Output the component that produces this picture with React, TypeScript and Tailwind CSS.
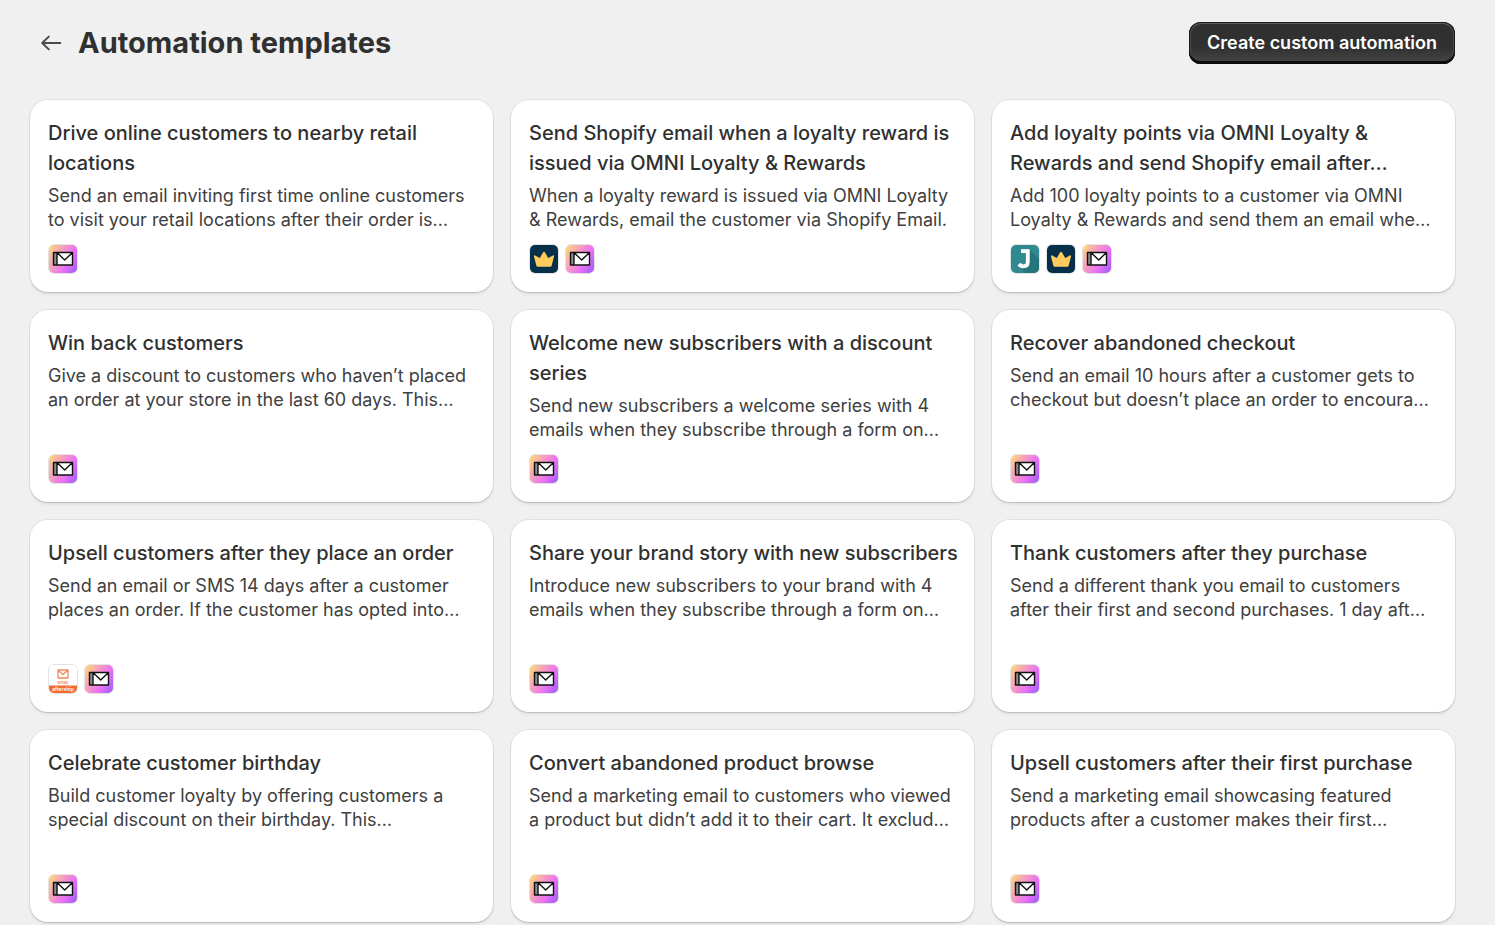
import type { ReactElement } from "react";

type AppName = "email" | "loyalty" | "joy" | "aftership";

type Template = {
  title: string;
  description: string;
  apps: AppName[];
};

const templates: Template[] = [
  {
    title: "Drive online customers to nearby retail locations",
    description:
      "Send an email inviting first time online customers to visit your retail locations after their order is…",
    apps: ["email"],
  },
  {
    title: "Send Shopify email when a loyalty reward is issued via OMNI Loyalty & Rewards",
    description:
      "When a loyalty reward is issued via OMNI Loyalty & Rewards, email the customer via Shopify Email.",
    apps: ["loyalty", "email"],
  },
  {
    title: "Add loyalty points via OMNI Loyalty & Rewards and send Shopify email after…",
    description:
      "Add 100 loyalty points to a customer via OMNI Loyalty & Rewards and send them an email whe…",
    apps: ["joy", "loyalty", "email"],
  },
  {
    title: "Win back customers",
    description:
      "Give a discount to customers who haven’t placed an order at your store in the last 60 days. This…",
    apps: ["email"],
  },
  {
    title: "Welcome new subscribers with a discount series",
    description:
      "Send new subscribers a welcome series with 4 emails when they subscribe through a form on…",
    apps: ["email"],
  },
  {
    title: "Recover abandoned checkout",
    description:
      "Send an email 10 hours after a customer gets to checkout but doesn’t place an order to encoura…",
    apps: ["email"],
  },
  {
    title: "Upsell customers after they place an order",
    description:
      "Send an email or SMS 14 days after a customer places an order. If the customer has opted into…",
    apps: ["aftership", "email"],
  },
  {
    title: "Share your brand story with new subscribers",
    description:
      "Introduce new subscribers to your brand with 4 emails when they subscribe through a form on…",
    apps: ["email"],
  },
  {
    title: "Thank customers after they purchase",
    description:
      "Send a different thank you email to customers after their first and second purchases. 1 day aft…",
    apps: ["email"],
  },
  {
    title: "Celebrate customer birthday",
    description:
      "Build customer loyalty by offering customers a special discount on their birthday. This…",
    apps: ["email"],
  },
  {
    title: "Convert abandoned product browse",
    description:
      "Send a marketing email to customers who viewed a product but didn’t add it to their cart. It exclud…",
    apps: ["email"],
  },
  {
    title: "Upsell customers after their first purchase",
    description:
      "Send a marketing email showcasing featured products after a customer makes their first…",
    apps: ["email"],
  },
];

function EmailIcon() {
  return (
    <svg viewBox="0 0 28 28" className="size-full" aria-hidden="true">
      <path d="M4.5 7.5H8V20H4.5z" fill="#8d8a90" />
      <path d="M8 7.5h15.5V20H8z" fill="#fff" />
      <path
        d="M4.5 7.5h19V20h-19zM8 7.5V20M8.5 8l7.2 7L23 8"
        fill="none"
        stroke="#111"
        strokeWidth="1.4"
        strokeLinejoin="round"
      />
    </svg>
  );
}

function CrownIcon() {
  return (
    <svg viewBox="0 0 28 28" className="size-full" aria-hidden="true">
      <path
        d="M6.4 20.8 4 11.4q-.3-1.7 1.1-1l4.7 2.6 3.2-5.6q1-1.5 2 0l3.2 5.6 4.7-2.6q1.4-.7 1.1 1l-2.4 9.4q-.3 1-1.2 1H7.6q-.9 0-1.2-1z"
        fill="#fecb5c"
      />
    </svg>
  );
}

function JoyIcon() {
  return (
    <svg viewBox="0 0 28 28" className="size-full" aria-hidden="true">
      <path d="M18.6 4.6 28 14v14H14.5L8 21.5l9-4z" fill="#26747c" />
      <path
        d="M10 6.2h6.8v10.6q0 4.6-4.4 4.6-2.6 0-4.4-2.4"
        fill="none"
        stroke="#fff"
        strokeWidth="3.8"
      />
    </svg>
  );
}

function AftershipIcon() {
  return (
    <svg viewBox="0 0 28 28" className="size-full" aria-hidden="true">
      <path
        d="M9 5h10v8H9zM9.3 5.6l4.7 4 4.7-4"
        fill="none"
        stroke="#f08a5d"
        strokeWidth="1.3"
        strokeLinejoin="round"
      />
      <text x="14" y="18.5" textAnchor="middle" fontSize="4" fontWeight="600" fill="#f08a5d">
        Email
      </text>
      <path d="M0 20.5h28V28H0z" fill="#f26b2c" />
      <text x="14" y="25.6" textAnchor="middle" fontSize="5" fontWeight="600" fill="#fff">
        aftership
      </text>
    </svg>
  );
}

const appIcons: Record<AppName, { label: string; tile: string; icon: ReactElement }> = {
  email: {
    label: "Shopify Email",
    tile: "bg-[linear-gradient(120deg,#fbe072_0%,#f8a6b4_30%,#ea70f6_65%,#9a5cf5_100%)]",
    icon: <EmailIcon />,
  },
  loyalty: { label: "OMNI Loyalty & Rewards", tile: "bg-[#06304a]", icon: <CrownIcon /> },
  joy: { label: "Joy Loyalty", tile: "bg-[#30898f]", icon: <JoyIcon /> },
  aftership: { label: "AfterShip Email", tile: "bg-white", icon: <AftershipIcon /> },
};

function TemplateCard({ title, description, apps }: Template) {
  return (
    <a
      href="#"
      className="flex flex-col rounded-[18px] bg-white py-[18px] pr-4 pl-[18px] shadow-[0_0_0_1px_rgba(0,0,0,0.06),0_1px_1px_rgba(0,0,0,0.12),0_3px_3px_rgba(0,0,0,0.05)]"
    >
      <h2 className="line-clamp-2 text-[20px] leading-[30px] font-medium">{title}</h2>
      <p className="line-clamp-2 text-[18px] leading-[24px] text-[#404040] not-first:mt-[6px]">
        {description}
      </p>
      <ul className="mt-auto flex gap-[6px] pt-3">
        {apps.map((app) => (
          <li
            key={app}
            title={appIcons[app].label}
            className="size-[30px] rounded-[6px] border border-[#e3e3e3] bg-white"
          >
            <div className={`size-full overflow-hidden rounded-[5px] ${appIcons[app].tile}`}>
              {appIcons[app].icon}
            </div>
          </li>
        ))}
      </ul>
    </a>
  );
}

export default function App() {
  return (
    <main className="min-h-screen bg-[#f0f0f0] pt-[22px] pr-10 pb-6 pl-[30px] font-['Inter',sans-serif] text-[#303030]">
      <header className="mb-9 flex items-center justify-between">
        <div className="flex items-center gap-[12px] pl-[6px]">
          <button type="button" aria-label="Back" className="size-[30px]">
            <svg viewBox="0 0 30 30" className="size-full" aria-hidden="true">
              <path
                d="M24.3 15H6.2M12.8 8.6 6.2 15l6.6 6.4"
                fill="none"
                stroke="#4a4a4a"
                strokeWidth="2"
                strokeLinecap="round"
                strokeLinejoin="round"
              />
            </svg>
          </button>
          <h1 className="text-[29px] leading-[36px] font-bold">Automation templates</h1>
        </div>
        <button
          type="button"
          className="h-[42px] rounded-[12px] bg-linear-to-b from-[#303030] from-60% to-[#484848] px-[18px] text-[18px] leading-[24px] font-semibold text-white shadow-[inset_0_-3px_0_#0d0d0d,inset_0_0_0_1px_#1a1a1a,inset_0_3px_0_-1px_#5e5e5e,inset_0_0_0_2px_#484848]"
        >
          Create custom automation
        </button>
      </header>

      <section
        aria-label="Templates"
        className="grid auto-rows-fr grid-cols-1 gap-[18px] md:grid-cols-2 lg:grid-cols-3"
      >
        {templates.map((template) => (
          <TemplateCard key={template.title} {...template} />
        ))}
      </section>
    </main>
  );
}
